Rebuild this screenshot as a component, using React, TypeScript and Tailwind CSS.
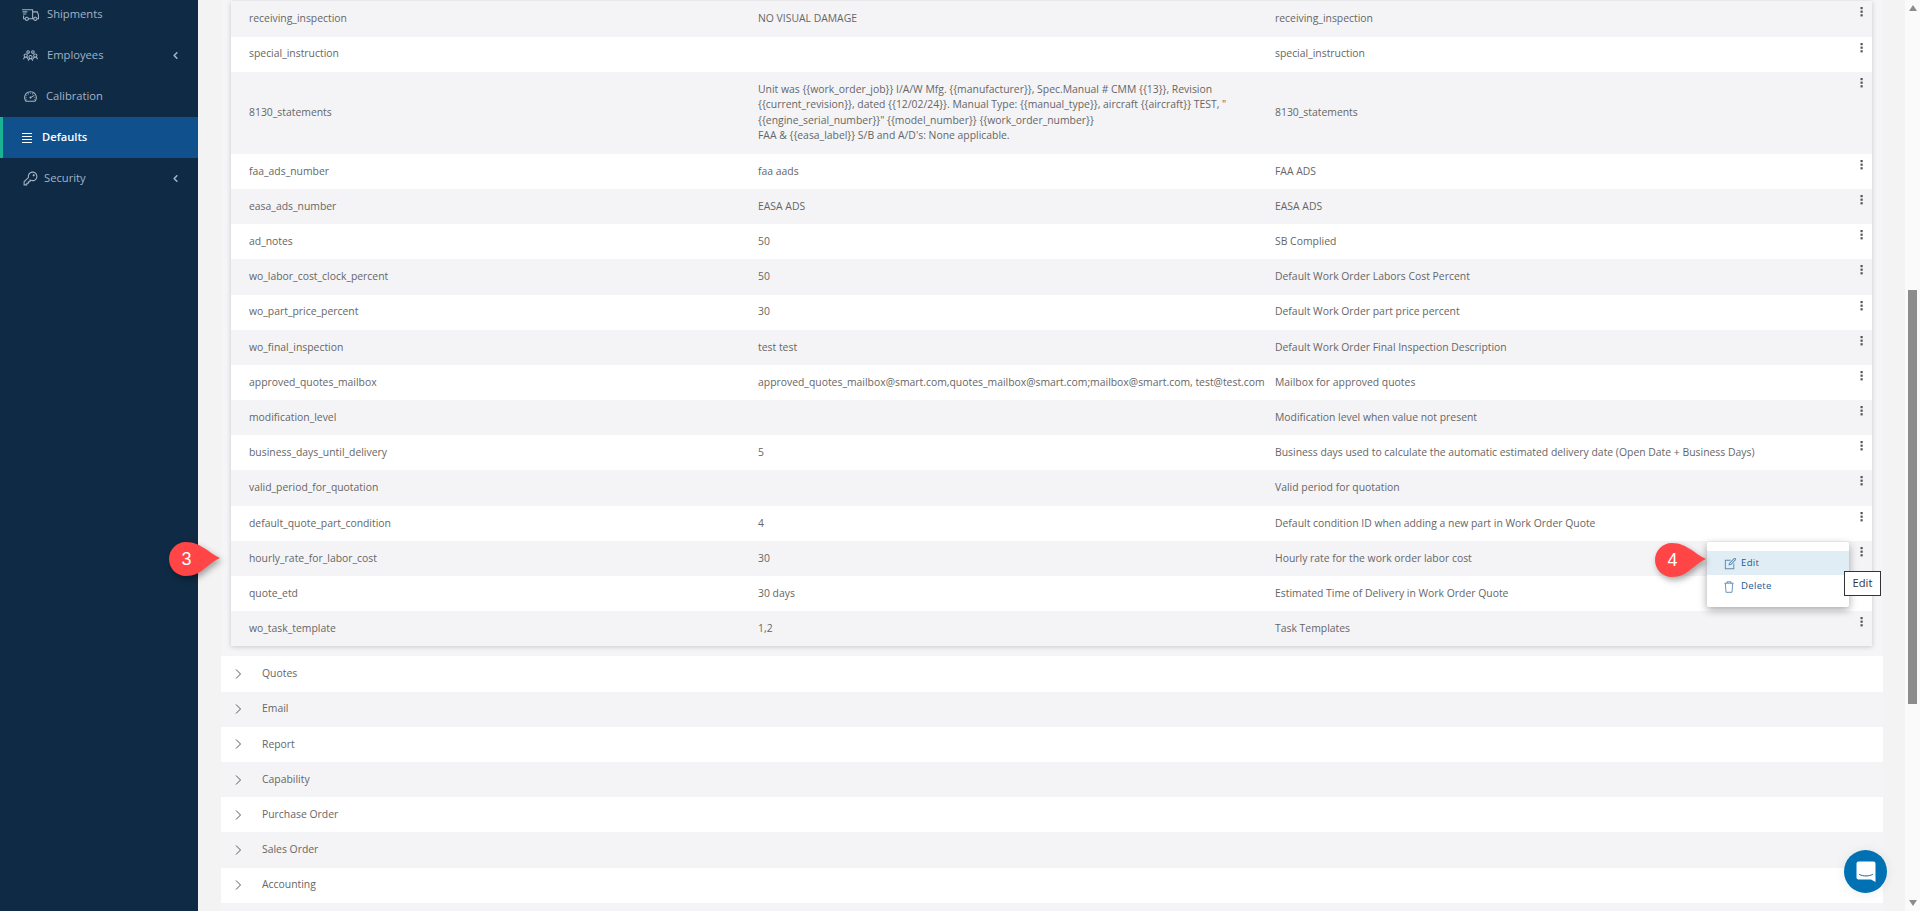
import { ReactNode } from 'react'
import { ChevronLeft } from 'lucide-react'
import {
  LiaShippingFastSolid,
  LiaUsersSolid,
  LiaTachometerAltSolid,
  LiaKeySolid,
  LiaEditSolid,
} from 'react-icons/lia'

type Row = {
  name: string
  value: ReactNode
  description: string
  tall?: boolean
}

const rows: Row[] = [
  { name: 'receiving_inspection', value: 'NO VISUAL DAMAGE', description: 'receiving_inspection' },
  { name: 'special_instruction', value: '', description: 'special_instruction' },
  {
    name: '8130_statements',
    tall: true,
    value: (
      <>
        Unit was {'{{work_order_job}}'} I/A/W Mfg. {'{{manufacturer}}'}, Spec.Manual # CMM {'{{13}}'}, Revision
        <br />
        {'{{current_revision}}'}, dated {'{{12/02/24}}'}. Manual Type: {'{{manual_type}}'}, aircraft {'{{aircraft}}'} TEST, "
        <br />
        {'{{engine_serial_number}}'}" {'{{model_number}}'} {'{{work_order_number}}'}
        <br />
        FAA &amp; {'{{easa_label}}'} S/B and A/D's: None applicable.
      </>
    ),
    description: '8130_statements',
  },
  { name: 'faa_ads_number', value: 'faa aads', description: 'FAA ADS' },
  { name: 'easa_ads_number', value: 'EASA ADS', description: 'EASA ADS' },
  { name: 'ad_notes', value: '50', description: 'SB Complied' },
  { name: 'wo_labor_cost_clock_percent', value: '50', description: 'Default Work Order Labors Cost Percent' },
  { name: 'wo_part_price_percent', value: '30', description: 'Default Work Order part price percent' },
  { name: 'wo_final_inspection', value: 'test test', description: 'Default Work Order Final Inspection Description' },
  {
    name: 'approved_quotes_mailbox',
    value: 'approved_quotes_mailbox@smart.com,quotes_mailbox@smart.com;mailbox@smart.com, test@test.com',
    description: 'Mailbox for approved quotes',
  },
  { name: 'modification_level', value: '', description: 'Modification level when value not present' },
  {
    name: 'business_days_until_delivery',
    value: '5',
    description: 'Business days used to calculate the automatic estimated delivery date (Open Date + Business Days)',
  },
  { name: 'valid_period_for_quotation', value: '', description: 'Valid period for quotation' },
  { name: 'default_quote_part_condition', value: '4', description: 'Default condition ID when adding a new part in Work Order Quote' },
  { name: 'hourly_rate_for_labor_cost', value: '30', description: 'Hourly rate for the work order labor cost' },
  { name: 'quote_etd', value: '30 days', description: 'Estimated Time of Delivery in Work Order Quote' },
  { name: 'wo_task_template', value: '1,2', description: 'Task Templates' },
]

const sections = ['Quotes', 'Email', 'Report', 'Capability', 'Purchase Order', 'Sales Order', 'Accounting', '']

function NavItem({
  icon,
  label,
  labelClass,
  caret,
  active,
}: {
  icon: ReactNode
  label: string
  labelClass: string
  caret?: boolean
  active?: boolean
}) {
  return (
    <div
      className={
        active
          ? 'h-[41px] flex items-center pl-[19px] pr-[17px] bg-[#10508c] border-l-[3px] border-[#1ab394] text-white font-semibold'
          : 'h-[41px] flex items-center pl-[22px] pr-[17px] text-[#a3b3c4]'
      }
    >
      <span className="flex items-center text-[17px]">{icon}</span>
      <span className={'flex-1 ' + labelClass}>{label}</span>
      {caret && <ChevronLeft size={11} strokeWidth={3.5} />}
    </div>
  )
}

function Kebab() {
  return (
    <svg width="3" height="10" viewBox="0 0 3 10" className="fill-[#555]">
      <rect x="0.5" y="0" width="2.2" height="2.2" />
      <rect x="0.5" y="3.6" width="2.2" height="2.2" />
      <rect x="0.5" y="7.2" width="2.2" height="2.2" />
    </svg>
  )
}

function Callout({ n, className }: { n: number; className: string }) {
  return (
    <div className={className}>
      <svg width="52" height="36" viewBox="0 0 52 36" className="absolute inset-0 drop-shadow-[2px_3px_3px_rgba(0,0,0,0.35)]">
        <path d="M17 1 C25 1 30 4 35 7 C40 10 46 15 51 17 C46 19 40 24 35 28 C30 32 25 35 17 35 C7 35 0 27 0 18 C0 9 7 1 17 1 Z" fill="#ff4545" />
      </svg>
      <span className="absolute left-0 top-0 w-[35px] h-[36px] flex items-center justify-center text-white text-[18px] font-['Liberation_Sans',sans-serif]">
        {n}
      </span>
    </div>
  )
}

export default function App() {
  return (
    <div className="relative h-[911px] w-[1920px] overflow-hidden flex bg-[#f3f3f3] font-['Open_Sans',sans-serif] text-[10.4px] text-[#666]">
      {/* sidebar */}
      <aside className="w-[198px] shrink-0 bg-[#0f2a44] -mt-[6px] text-[11.2px]">
        <NavItem icon={<LiaShippingFastSolid />} label="Shipments" labelClass="ml-[8px]" />
        <NavItem icon={<LiaUsersSolid />} label="Employees" labelClass="ml-[8px]" caret />
        <NavItem icon={<LiaTachometerAltSolid />} label="Calibration" labelClass="ml-[7px]" />
        <NavItem
          icon={
            <svg width="10" height="10" viewBox="0 0 10 10" fill="#fff">
              <rect y="0" width="10" height="1" />
              <rect y="3" width="10" height="1" />
              <rect y="6" width="10" height="1" />
              <rect y="9" width="10" height="1" />
            </svg>
          }
          label="Defaults"
          labelClass="ml-[10px]"
          active
        />
        <NavItem icon={<LiaKeySolid />} label="Security" labelClass="ml-[5px]" caret />
      </aside>

      {/* content */}
      <main className="flex-1 pl-[23px] pr-[22px]">
        <div className="bg-[#f5f5f8] px-[10px] pt-[1.4px] pb-[10px] pr-[11px]">
          <div className="bg-white shadow-[0_1px_5px_rgba(0,0,0,0.18)]">
            {rows.map((r, i) => (
              <div
                key={r.name}
                className={
                  (i % 2 === 0 ? 'bg-[#f4f4f7] ' : 'bg-white ') +
                  (r.tall ? 'h-[82px] ' : 'h-[35.2px] ') +
                  'relative grid grid-cols-[509px_517px_1fr] items-center pl-[18px] leading-[15.4px]'
                }
              >
                <div>{r.name}</div>
                <div className="pr-[8px] whitespace-nowrap">{r.value}</div>
                <div className="whitespace-nowrap">{r.description}</div>
                <div className="absolute right-[9px] top-[6px] flex">
                  <Kebab />
                </div>
              </div>
            ))}
          </div>
        </div>
        {sections.map((s, i) => (
          <div
            key={i}
            className={(i % 2 === 0 ? 'bg-white ' : 'bg-[#f4f4f7] ') + 'h-[35.2px] flex items-center pl-[14px]'}
          >
            <svg width="7" height="10" viewBox="0 0 7 10" fill="none" stroke="#555" strokeWidth="1">
              <path d="M1 0.5L5.5 5L1 9.5" />
            </svg>
            <span className="ml-[20px]">{s}</span>
          </div>
        ))}
      </main>

      {/* page scrollbar */}
      <div className="relative w-[15px] shrink-0 bg-[#fafafa] flex flex-col items-center">
        <div className="w-0 h-0 mt-[5px] border-x-[4.5px] border-x-transparent border-b-[6px] border-b-[#8c8c8c]" />
        <div className="w-[9px] h-[414px] mt-[279px] bg-[#8c8c8c]" />
        <div className="w-0 h-0 mt-auto mb-[5px] border-x-[4.5px] border-x-transparent border-t-[6px] border-t-[#8c8c8c]" />
      </div>

      {/* row action menu */}
      <div className="absolute left-[1707px] top-[542px] w-[142px] h-[65px] bg-white rounded-[2px] pt-[9px] shadow-[0_3px_8px_rgba(0,0,0,0.35)] text-[9.6px] tracking-[0.3px] text-[#1f5a94]">
        <div className="h-[24px] flex items-center pl-[16px] bg-[#e1edf5]">
          <LiaEditSolid className="text-[15px] text-[#5b8ab5]" />
          <span className="ml-[3px]">Edit</span>
        </div>
        <div className="h-[23px] flex items-center pl-[17px]">
          <svg width="10" height="12" viewBox="0 0 10 12" fill="none" stroke="#5b8ab5" strokeWidth="0.9">
            <path d="M0.5 2.2H9.5M3 2.2V0.8H7V2.2M1.3 2.2L2 11.3H8L8.7 2.2" />
          </svg>
          <span className="ml-[7px]">Delete</span>
        </div>
      </div>

      {/* tooltip */}
      <div className="absolute left-[1844px] top-[571px] w-[37px] h-[25px] bg-white border border-[#333] flex items-center justify-center text-[11.2px] text-[#333]">
        Edit
      </div>

      <Callout n={3} className="absolute left-[169px] top-[541px] w-[52px] h-[36px]" />
      <Callout n={4} className="absolute left-[1655px] top-[542px] w-[52px] h-[36px]" />

      {/* chat launcher */}
      <div className="absolute left-[1844px] top-[850px] w-[43px] h-[43px] rounded-full bg-[#0071b2] flex items-center justify-center shadow-[0_1px_12px_rgba(0,0,0,0.08)]">
        <svg width="20" height="22" viewBox="0 0 20 22">
          <path d="M2.5 0.5H17.5A2 2 0 0 1 19.5 2.5V21L15 18.5H2.5A2 2 0 0 1 0.5 16.5V2.5A2 2 0 0 1 2.5 0.5Z" fill="#fff" />
          <path d="M3.5 13.5C7 15.5 13 15.5 16.5 13.5" fill="none" stroke="#0071b2" strokeWidth="1" strokeLinecap="round" />
        </svg>
      </div>
    </div>
  )
}
